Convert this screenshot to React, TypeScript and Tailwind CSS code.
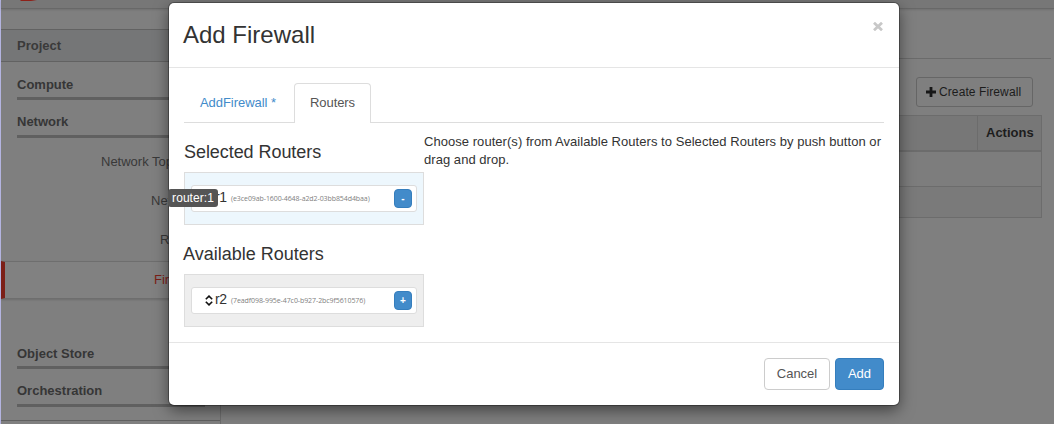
import type { ReactNode } from 'react';

function NavGroup({ label, pad = '' }: { label: string; pad?: string }) {
  return (
    <div className="ml-4 mr-[15px] h-[38px] shrink-0">
      <div className={`h-[22px] text-[13px] leading-[18px] font-bold text-[#363636] ${pad}`}>{label}</div>
      <div className="h-[3px] bg-[#606060]" />
    </div>
  );
}

function NavItem({ label, indent }: { label: string; indent: string }) {
  return <div className={`h-[39px] shrink-0 whitespace-nowrap text-[13px] leading-[39px] text-[#393939] ${indent}`}>{label}</div>;
}

function Sidebar() {
  return (
    <aside className="flex h-[415px] w-[220px] shrink-0 flex-col overflow-hidden border-r border-[#6c6c6c]">
      <div className="mt-5 h-[33px] shrink-0 border-y border-[#626262] bg-[#757677] pl-4 text-[13px] leading-[31px] font-bold text-[#3a3a3a]">
        Project
      </div>
      <div className="h-[13px] shrink-0" />
      <NavGroup label="Compute" pad="pt-px" />
      <NavGroup label="Network" />
      <div className="-mt-[9px] h-0 shrink-0" />
      <NavItem label="Network Topology" indent="pl-[100px]" />
      <NavItem label="Networks" indent="pl-[150px]" />
      <NavItem label="Routers" indent="pl-[159px]" />
      <div className="mt-[2px] h-[38px] shrink-0 border-y border-l-4 border-y-[#6e6e6e] border-l-[#7c1f18] bg-[#818181] pl-[149px] text-[13px] leading-[35px] text-[#7c1f18] shadow-[0_1px_2px_rgba(0,0,0,0.15)]">
        Firewalls
      </div>
      <div className="h-[45px] shrink-0" />
      <NavGroup label="Object Store" pad="pt-px" />
      <NavGroup label="Orchestration" />
      <div className="h-px shrink-0 bg-[#606060]" />
    </aside>
  );
}

function Background() {
  return (
    <div className="h-[424px] border-l border-[#b4b4e0] bg-[#7f7f7f]">
      <header className="h-[9px] border-b border-[#686868] bg-[#777777] shadow-[0_1px_2px_rgba(0,0,0,0.12)]">
        <svg className="ml-[18px] block" width="20" height="2" viewBox="0 0 20 2">
          <path d="M1 0h17l-6 1H2z" fill="#8e2119" />
        </svg>
      </header>
      <div className="flex">
        <Sidebar />
        <main className="flex grow flex-col pl-4">
          <div className="mr-[3px] h-[50px] border-b border-[#6b6b6b]" />
          <div className="mt-[18px] mr-[21px] flex h-[30px] w-[117px] items-center self-end rounded-[3px] border border-[#666666] pl-[9px] text-xs tracking-[0.1px] text-[#1c1c1c]">
            <svg width="10" height="10" viewBox="0 0 10 10" className="mr-[3px] shrink-0">
              <path d="M3.6 0h2.8v3.6H10v2.8H6.4V10H3.6V6.4H0V3.6h3.6z" fill="#171717" />
            </svg>
            <span className="whitespace-nowrap">Create Firewall</span>
          </div>
          <div className="mt-2 mr-3 h-[103px] border border-[#6c6c6c]">
            <div className="flex h-[36px] justify-end border-b-2 border-[#6c6c6c] bg-[#777777]">
              <div className="w-[64px] border-l border-[#6c6c6c] pl-2 text-[13px] leading-[34px] font-bold text-[#1d1d1d]">Actions</div>
            </div>
            <div className="h-[35px] border-b border-[#6c6c6c] bg-[#7d7d7d]" />
            <div className="h-[30px] bg-[#7a7a7a]" />
          </div>
        </main>
      </div>
    </div>
  );
}

function SortHandle() {
  return (
    <svg width="8" height="11" viewBox="0 0 8 11" fill="none" stroke="#111" strokeWidth="1.6" className="shrink-0">
      <path d="M.8 4.2 4 1.1l3.2 3.1M.8 6.8 4 9.9l3.2-3.1" />
    </svg>
  );
}

function RouterRow({ name, id, sign, panel, children }: { name: string; id: string; sign: string; panel: string; children?: ReactNode }) {
  return (
    <div className={`h-[53px] w-[240px] border border-[#dddddd] px-[6px] pt-3 ${panel}`}>
      <div className="relative flex h-[27px] items-center rounded-[3px] border border-[#dddddd] bg-white pl-[13px] pr-1">
        <SortHandle />
        <span className="-mt-[3px] ml-[2px] w-4 text-sm leading-[26px] tracking-[-0.5px] text-[#333]">{name}</span>
        <span className="mt-[2px] whitespace-nowrap font-['Open_Sans',sans-serif] text-[7px] tracking-[-0.08px] text-[#808080]">{id}</span>
        <span className="ml-auto flex h-[19px] w-[18px] items-center justify-center rounded-[4px] border border-[#357ebd] bg-[#428bca] text-[10px] font-bold leading-none text-white">
          {sign}
        </span>
        {children}
      </div>
    </div>
  );
}

function Dialog() {
  return (
    <section className="absolute left-[169px] top-[3px] h-[402px] w-[730px] rounded-[5px] bg-white text-[13px] text-[#333] shadow-[0_5px_15px_rgba(0,0,0,0.5),0_0_0_1px_rgba(0,0,0,0.3)]">
      <header className="flex h-[65px] justify-between border-b border-[#e5e5e5] pl-[14px] pr-[16px]">
        <h1 className="pt-[15px] text-2xl leading-[34px]">Add Firewall</h1>
        <svg className="mt-[19px]" width="10" height="9" viewBox="0 0 10 9" fill="none" stroke="#c8c8c8" strokeWidth="2.7">
          <path d="m1 .7 8 7.6M9 .7 1 8.3" />
        </svg>
      </header>
      <nav className="mx-[15px] mt-[15px] flex h-[40px] border-b border-[#dddddd]">
        <span className="w-[110px] pl-4 leading-[39px] tracking-[-0.05px] text-[#428bca]">AddFirewall *</span>
        <span className="h-[40px] w-[77px] rounded-t-[4px] border border-b-0 border-[#dddddd] bg-white text-center leading-[37px] tracking-[-0.1px] text-[#555]">Routers</span>
      </nav>
      <div className="mx-[15px] flex h-[219px]">
        <div className="w-[240px] shrink-0">
          <h2 className="h-[49px] pt-[19px] text-lg leading-5 tracking-[-0.06px]">Selected Routers</h2>
          <RouterRow name="r1" id="(e3ce09ab-1600-4648-a2d2-03bb854d4baa)" sign="-" panel="bg-[#edf7fd]">
            <span className="absolute -left-[24px] top-[3px] h-[18px] w-[50px] rounded-[3px] bg-[#555] text-center text-[12px] leading-[18px] font-medium tracking-[0.05px] text-white">
              router:1
            </span>
          </RouterRow>
          <h2 className="-ml-px h-[49px] pt-[19px] text-lg leading-5">Available Routers</h2>
          <RouterRow name="r2" id="(7eadf098-995e-47c0-b927-2bc9f5610576)" sign="+" panel="bg-[#eeeeee]" />
        </div>
        <p className="whitespace-nowrap pt-[10px] leading-[18px] tracking-[0.045px]">
          Choose router(s) from Available Routers to Selected Routers by push button or
          <br />
          drag and drop.
        </p>
      </div>
      <footer className="flex h-[63px] justify-end gap-[5px] border-t border-[#e5e5e5] pt-[15px] pr-[15px]">
        <button className="h-8 w-[66px] rounded-[4px] border border-[#cccccc] bg-white text-[#555]">Cancel</button>
        <button className="h-8 w-[49px] rounded-[4px] border border-[#357ebd] bg-[#428bca] text-white">Add</button>
      </footer>
    </section>
  );
}

export default function App() {
  return (
    <div className="relative h-[424px] w-[1054px] overflow-hidden font-['Liberation_Sans',Arial,sans-serif]">
      <Background />
      <Dialog />
    </div>
  );
}
